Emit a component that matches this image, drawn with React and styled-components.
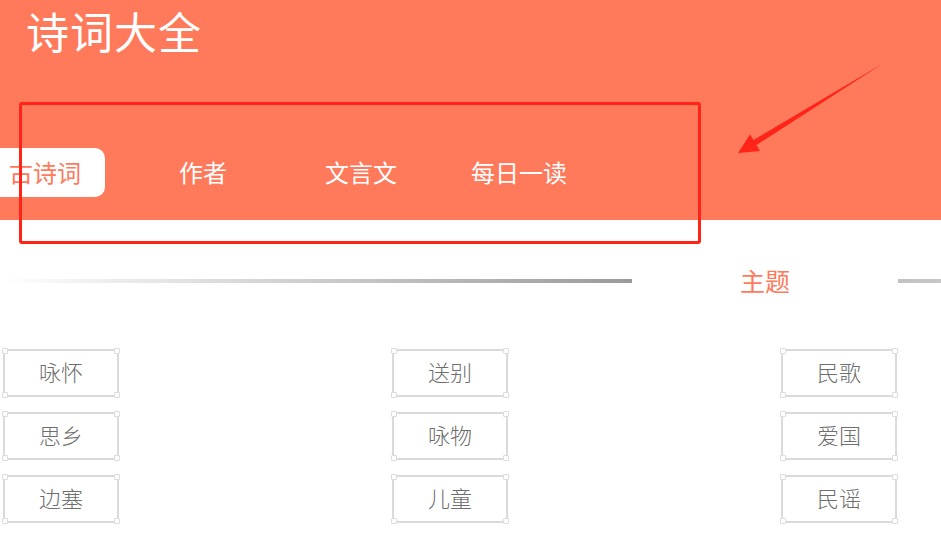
import React, { useState } from "react";
import styled, { createGlobalStyle } from "styled-components";

const GlobalStyle = createGlobalStyle`
  html, body {
    margin: 0;
    padding: 0;
    background: #fff;
    overflow: hidden;
  }
  body {
    font-family: "Noto Sans CJK SC", "Noto Sans", sans-serif;
  }
`;

const tabs = ["古诗词", "作者", "文言文", "每日一读"];
const topics = ["咏怀", "送别", "民歌", "思乡", "咏物", "爱国", "边塞", "儿童", "民谣"];

function App() {
  const [active, setActive] = useState(0);
  return (
    <Page>
      <GlobalStyle />
      <Header>
        <Title>诗词大全</Title>
        <TabBar>
          {tabs.map((t, i) => (
            <Tab key={t} onClick={() => setActive(i)}>
              <TabLabel active={i === active}>{t}</TabLabel>
            </Tab>
          ))}
        </TabBar>
      </Header>

      <SectionHead>
        <LeftLine />
        <SectionTitle>主题</SectionTitle>
        <RightLine />
      </SectionHead>

      <TagGrid>
        {topics.map((t) => (
          <TagBox key={t}>
            <Corner pos="tl" />
            <Corner pos="tr" />
            <Corner pos="bl" />
            <Corner pos="br" />
            {t}
          </TagBox>
        ))}
      </TagGrid>

      <Annotation />
      <Arrow viewBox="0 0 941 546">
        <polygon
          points="738,153 750,134.5 753.6,140 882,64 756.4,145 760,151"
          fill="#ff2318"
        />
      </Arrow>
    </Page>
  );
}

export default App;

const Page = styled.div`
  position: relative;
  width: 941px;
  height: 546px;
  overflow: hidden;
`;

const Header = styled.div`
  height: 220px;
  background: #ff795b;
  display: flex;
  flex-direction: column;
`;

const Title = styled.div`
  height: 56px;
  padding-left: 26px;
  padding-top: 2px;
  box-sizing: border-box;
  color: #fff;
  font-size: 43px;
  line-height: 56px;
  letter-spacing: 1px;
`;

const TabBar = styled.div`
  display: flex;
  margin-top: 92px;
  margin-left: -34px;
`;

const Tab = styled.div`
  width: 158px;
  display: flex;
  justify-content: center;
  cursor: pointer;
`;

const TabLabel = styled.div`
  width: 120px;
  height: 49px;
  padding-bottom: 2px;
  box-sizing: border-box;
  display: flex;
  align-items: center;
  justify-content: center;
  font-size: 24px;
  border-radius: 10px;
  color: ${(p) => (p.active ? "#ff795b" : "#fff")};
  background: ${(p) => (p.active ? "#fff" : "transparent")};
`;

const SectionHead = styled.div`
  display: flex;
  align-items: center;
  height: 30px;
  margin-top: 46px;
`;

const LeftLine = styled.div`
  width: 632px;
  height: 4px;
  flex-shrink: 0;
  background: linear-gradient(to right, rgba(153, 153, 153, 0), #9a9a9a);
`;

const SectionTitle = styled.div`
  flex-shrink: 0;
  margin: 0 108px;
  color: #ff795b;
  font-size: 25px;
  line-height: 30px;
  padding-bottom: 3px;
`;

const RightLine = styled.div`
  width: 632px;
  height: 4px;
  flex-shrink: 0;
  background: linear-gradient(to right, #c2c2c2, rgba(194, 194, 194, 0));
`;

const TagGrid = styled.div`
  display: grid;
  grid-template-columns: repeat(3, 116px);
  justify-content: space-between;
  row-gap: 15px;
  width: 894px;
  margin-left: 3px;
  margin-top: 53px;
`;

const TagBox = styled.div`
  position: relative;
  height: 48px;
  padding-bottom: 4px;
  box-sizing: border-box;
  border: 2px solid #dadada;
  display: flex;
  align-items: center;
  justify-content: center;
  color: #6e6e6e;
  font-size: 22px;
  font-weight: 300;
`;

const Corner = styled.span`
  position: absolute;
  width: 4px;
  height: 4px;
  border: 1px solid #dcdcdc;
  border-radius: 1px;
  background: #fff;
  ${(p) => (p.pos[0] === "t" ? "top: -3px;" : "bottom: -3px;")}
  ${(p) => (p.pos[1] === "l" ? "left: -3px;" : "right: -3px;")}
`;

const Annotation = styled.div`
  position: absolute;
  left: 19px;
  top: 102px;
  width: 682px;
  height: 142px;
  box-sizing: border-box;
  border: 3px solid #ff2318;
  border-radius: 3px;
  pointer-events: none;
`;

const Arrow = styled.svg`
  position: absolute;
  left: 0;
  top: 0;
  width: 941px;
  height: 546px;
  pointer-events: none;
`;
